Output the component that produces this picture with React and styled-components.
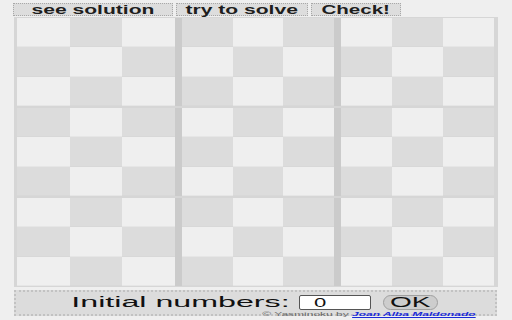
import styled, { createGlobalStyle } from "styled-components";

const GlobalStyle = createGlobalStyle`
  html, body {
    margin: 0;
    padding: 0;
    background: #efefef;
    font-family: "Liberation Sans", Arial, sans-serif;
  }
`;

const Page = styled.div`
  width: 512px;
  height: 320px;
  overflow: hidden;
  background: #efefef;
`;

const TopBar = styled.div`
  display: flex;
  gap: 3px;
  padding: 3px 0 0 13px;
  height: 13px;
`;

const TopButton = styled.button`
  width: ${(p) => p.$w}px;
  height: 13px;
  padding: 0;
  box-sizing: border-box;
  border: 1px dotted #a8a8a8;
  background: #dddddd;
  color: #1e1e1e;
  font-family: "Liberation Sans", Arial, sans-serif;
  font-weight: bold;
  font-size: 13px;
  line-height: 11px;
  display: flex;
  align-items: center;
  justify-content: center;
  overflow: visible;
  cursor: pointer;
`;

const Stretch = styled.span`
  display: inline-block;
  white-space: nowrap;
  transform: scaleX(${(p) => p.$sx});
  transform-origin: ${(p) => p.$origin || "center"};
`;

const Board = styled.div`
  margin: 1px 0 0 14px;
  width: 484px;
  height: 270px;
  box-sizing: border-box;
  padding: 1px 4px 1px 3px;
  background: #d6d6d6;
  display: flex;
  flex-direction: column;
  gap: 2px;
`;

const BlockRow = styled.div`
  flex: 1;
  display: grid;
  grid-template-columns: 158px 152px 153px;
  column-gap: 7px;
  background: #cbcbcb;
`;

const Block = styled.div`
  display: grid;
  grid-template-columns: repeat(3, 1fr);
  grid-template-rows: repeat(3, 1fr);
`;

const Cell = styled.div`
  background: ${(p) => (p.$dark ? "#dcdcdc" : "#efefef")};
  box-shadow: inset 0 -1px 0 ${(p) => (p.$dark ? "#d8d8d8" : "#e6e6e6")};
`;

const Panel = styled.div`
  margin: 3px 0 0 14px;
  width: 483px;
  height: 26px;
  box-sizing: border-box;
  border: 2px dotted #c2c2c2;
  background: #dcdcdc;
  display: flex;
  flex-direction: column;
`;

const InputRow = styled.div`
  display: flex;
  align-items: center;
  justify-content: center;
  height: 15px;
  margin-top: 3px;
  padding-right: 2px;
`;

const Label = styled.div`
  width: 217px;
  margin-right: 10px;
  font-size: 14px;
  line-height: 15px;
  color: #111;
  text-align: center;
`;

const NumberBox = styled.div`
  width: 72px;
  height: 15px;
  box-sizing: border-box;
  border: 1px solid #555;
  border-radius: 2px;
  background: #fff;
  font-size: 13px;
  line-height: 13px;
  color: #111;
  padding-left: 14px;
  margin-right: 12px;
`;

const OkButton = styled.button`
  width: 55px;
  height: 15px;
  padding: 0;
  box-sizing: border-box;
  border: 1px solid #a0a0a0;
  border-radius: 8px;
  background: #cdcdcd;
  font-family: "Liberation Sans", Arial, sans-serif;
  font-size: 14px;
  line-height: 13px;
  color: #111;
  display: flex;
  align-items: center;
  justify-content: center;
`;

const Credits = styled.div`
  display: flex;
  justify-content: flex-end;
  padding-right: 19px;
  margin-top: 1px;
  font-size: 6px;
  line-height: 6px;
  height: 6px;
  color: #666;
`;

const CreditLink = styled.a`
  color: #1a2bd8;
  font-weight: bold;
  font-style: italic;
  text-decoration: underline;
`;

const rows = [0, 1, 2];

export default function App() {
  return (
    <Page>
      <GlobalStyle />
      <TopBar>
        <TopButton $w={160}>
          <Stretch $sx={1.62}>see solution</Stretch>
        </TopButton>
        <TopButton $w={132}>
          <Stretch $sx={1.62}>try to solve</Stretch>
        </TopButton>
        <TopButton $w={90}>
          <Stretch $sx={1.58}>Check!</Stretch>
        </TopButton>
      </TopBar>

      <Board>
        {rows.map((br) => (
          <BlockRow key={br}>
            {rows.map((bc) => (
              <Block key={bc}>
                {Array.from({ length: 9 }).map((_, i) => {
                  const r = br * 3 + Math.floor(i / 3);
                  const c = bc * 3 + (i % 3);
                  return <Cell key={i} $dark={(r + c) % 2 === 1} />;
                })}
              </Block>
            ))}
          </BlockRow>
        ))}
      </Board>

      <Panel>
        <InputRow>
          <Label>
            <Stretch $sx={2.3}>Initial numbers:</Stretch>
          </Label>
          <NumberBox>
            <Stretch $sx={1.7} $origin="left">0</Stretch>
          </NumberBox>
          <OkButton>
            <Stretch $sx={2}>OK</Stretch>
          </OkButton>
        </InputRow>
        <Credits>
          <Stretch $sx={2} $origin="right">
            © Yasminoku by <CreditLink href="#">Joan Alba Maldonado</CreditLink>
          </Stretch>
        </Credits>
      </Panel>
    </Page>
  );
}
